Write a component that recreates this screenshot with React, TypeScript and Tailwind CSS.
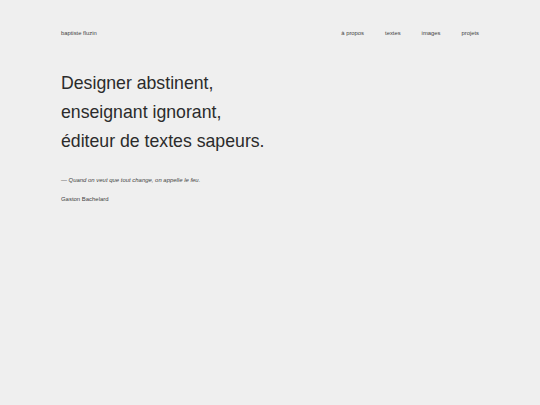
export default function App() {
  return (
    <div className="min-h-[405px] w-full bg-[#efefef] text-[#333] px-[61px] pt-[29px]" style={{ fontFamily: '"Liberation Sans", Arial, sans-serif' }}>
      <header className="flex items-center justify-between text-[5.85px] leading-[9px] text-[#444]">
        <span>baptiste fluzin</span>
        <nav className="flex gap-[21px]">
          <span>à propos</span>
          <span>textes</span>
          <span>images</span>
          <span>projets</span>
        </nav>
      </header>
      <h1 className="mt-[31px] text-[17.7px] leading-[28.8px] font-normal text-[#2b2b2b]">
        Designer abstinent,<br />
        enseignant ignorant,<br />
        éditeur de textes sapeurs.
      </h1>
      <p className="mt-[21px] text-[5.95px] leading-[9px] text-[#444]">
        — <em>Quand on veut que tout change, on appelle le feu.</em>
      </p>
      <p className="mt-[10px] text-[5.95px] leading-[9px] text-[#444]">Gaston Bachelard</p>
    </div>
  );
}
